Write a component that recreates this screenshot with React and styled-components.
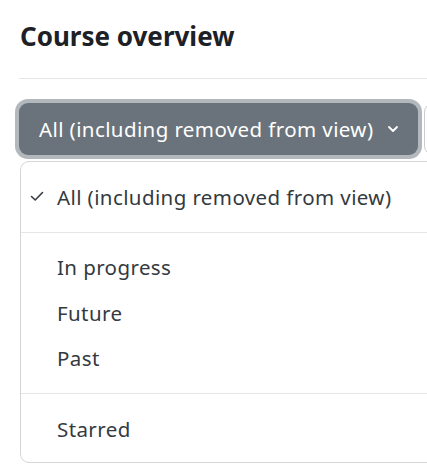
import React from "react";
import styled, { createGlobalStyle } from "styled-components";

const GlobalStyle = createGlobalStyle`
  body {
    margin: 0;
    padding: 0;
    background: #fff;
    font-family: "Noto Sans", "Open Sans", sans-serif;
    color: #1d2125;
  }
`;

const Block = styled.section`
  box-sizing: border-box;
  width: 100%;
  height: 464px;
  overflow: hidden;
  padding: 16px 0 0 19px;
`;

const Title = styled.h2`
  margin: 0 0 0 1px;
  font-size: 26px;
  font-weight: 700;
  line-height: 40px;
  color: #1d2125;
`;

const Rule = styled.hr`
  margin: 22px 0 24px;
  border: 0;
  border-top: 1px solid #e4e6e8;
`;

const Toolbar = styled.div`
  display: flex;
  align-items: flex-start;
  gap: 6px;
`;

const Dropdown = styled.div`
  position: relative;
  flex: none;
`;

const Toggle = styled.button`
  display: flex;
  align-items: center;
  gap: 14px;
  width: 399px;
  height: 52px;
  padding: 0 0 0 20px;
  border: 0;
  border-radius: 9px;
  background: #6a737b;
  color: #fff;
  font-family: inherit;
  font-size: 20.5px;
  letter-spacing: 0.4px;
  box-shadow: 0 0 0 4px #b3b8bd;
  cursor: pointer;
`;

const NextButton = styled.button`
  flex: none;
  width: 80px;
  height: 52px;
  border: 1px solid #c9ccd0;
  border-radius: 9px;
  background: #fff;
`;

const Menu = styled.ul`
  position: absolute;
  z-index: 2;
  top: 58px;
  left: 1px;
  width: 430px;
  height: 302px;
  margin: 0;
  padding: 12px 0 10px;
  list-style: none;
  background: #fff;
  border: 1px solid #d3d6d9;
  border-radius: 9px;
  box-sizing: border-box;
`;

const Item = styled.li`
  display: flex;
  align-items: center;
  height: 45.5px;
  padding-left: 36px;
  position: relative;
  font-size: 20.5px;
  letter-spacing: 0.4px;
  color: #343a40;
`;

const Check = styled.svg`
  position: absolute;
  left: 9px;
  top: 17px;
`;

const Divider = styled.li`
  margin: 12px 0;
  border-top: 1px solid #e4e6e8;
`;

function Chevron() {
  return (
    <svg width="12" height="8" viewBox="0 0 12 8" fill="none">
      <path d="M2 2 L6 6 L10 2" stroke="#fff" strokeWidth="1.8" strokeLinecap="round" strokeLinejoin="round" />
    </svg>
  );
}

export default function App() {
  return (
    <>
      <GlobalStyle />
      <Block>
        <Title>Course overview</Title>
        <Rule />
        <Toolbar>
          <Dropdown>
            <Toggle>
              All (including removed from view)
              <Chevron />
            </Toggle>
            <Menu>
              <Item>
                <Check width="14" height="11" viewBox="0 0 14 11" fill="none">
                  <path d="M1.5 5.5 L5.2 9 L12.5 1.5" stroke="#343a40" strokeWidth="1.6" strokeLinecap="round" strokeLinejoin="round" />
                </Check>
                All (including removed from view)
              </Item>
              <Divider />
              <Item>In progress</Item>
              <Item>Future</Item>
              <Item>Past</Item>
              <Divider />
              <Item>Starred</Item>
            </Menu>
          </Dropdown>
          <NextButton aria-label="Sort" />
        </Toolbar>
      </Block>
    </>
  );
}
